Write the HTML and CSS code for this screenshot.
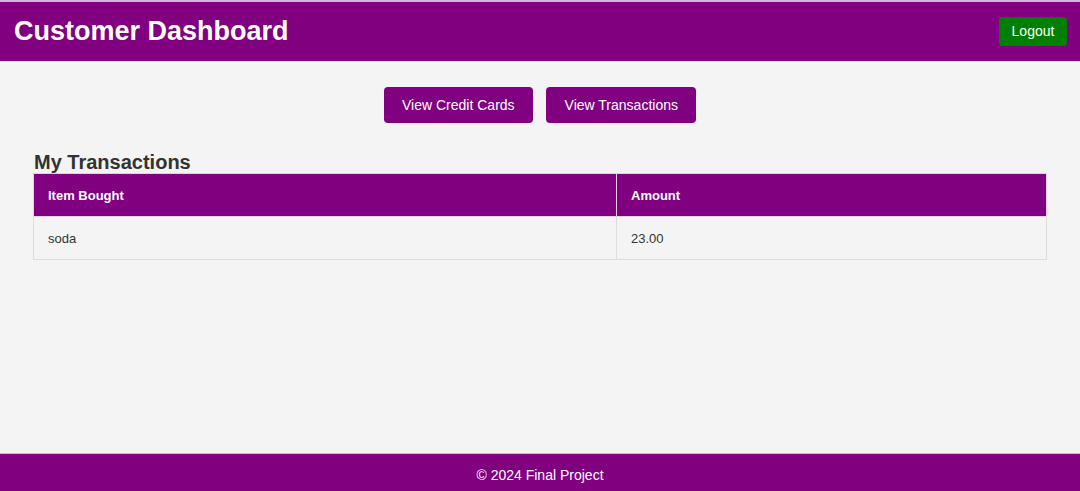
FILE: index.html
```html
<!DOCTYPE html>
<html lang="en">
<head>
<meta charset="utf-8">
<title>Customer Dashboard</title>
<link rel="stylesheet" href="styles.css">
</head>
<body>
<div class="page">
  <header class="topbar">
    <h1 class="title">Customer Dashboard</h1>
    <button class="logout">Logout</button>
  </header>
  <main class="main">
    <nav class="actions">
      <button class="action">View Credit Cards</button>
      <button class="action">View Transactions</button>
    </nav>
    <section class="section">
      <h2 class="section-title">My Transactions</h2>
      <table class="table">
        <thead>
          <tr><th class="col-item">Item Bought</th><th>Amount</th></tr>
        </thead>
        <tbody>
          <tr><td>soda</td><td>23.00</td></tr>
        </tbody>
      </table>
    </section>
  </main>
  <footer class="footer">© 2024 Final Project</footer>
</div>
</body>
</html>
```
FILE: styles.css
```css
* { box-sizing: border-box; }
html, body { margin: 0; padding: 0; }
body {
  font-family: "Liberation Sans", Arial, sans-serif;
  background: #f4f4f4;
  color: #333;
}
.page {
  min-height: 491px;
  display: flex;
  flex-direction: column;
}
.topbar {
  background: #800080;
  border-top: 2px solid #d9b3d9;
  height: 61px;
  display: flex;
  align-items: center;
  justify-content: space-between;
  padding: 0 13px 0 14px;
}
.title {
  margin: 0;
  color: #fff;
  font-size: 27px;
  font-weight: bold;
  line-height: 1;
  padding-bottom: 1px;
}
.logout {
  background: #008000;
  color: #fff;
  border: none;
  border-radius: 3px;
  font-family: inherit;
  font-size: 14px;
  height: 29px;
  width: 68px;
  padding: 0;
  margin-bottom: 1px;
}
.main {
  flex: 1;
  padding: 26px 33px 0;
}
.actions {
  display: flex;
  justify-content: center;
  gap: 13px;
}
.action {
  background: #800080;
  color: #fff;
  border: none;
  border-radius: 4px;
  font-family: inherit;
  font-size: 14px;
  height: 36px;
  padding: 0 18.5px;
}
.section-title {
  margin: 29px 0 0 1px;
  font-size: 20px;
  font-weight: bold;
  line-height: 21px;
  color: #333;
}
.table {
  width: 100%;
  border-collapse: collapse;
  font-size: 13px;
}
.table th, .table td {
  border: 1px solid #ddd;
  text-align: left;
  padding: 0 14px;
  height: 43px;
}
.table th {
  background: #800080;
  color: #fff;
  font-weight: bold;
  border-color: #e8cfe8;
}
.table td { color: #333; }
.col-item { width: 583px; }
.footer {
  background: #800080;
  color: #fff;
  text-align: center;
  font-size: 14px;
  height: 38px;
  line-height: 42px;
  border-top: 1px solid #d9b3d9;
}
```
